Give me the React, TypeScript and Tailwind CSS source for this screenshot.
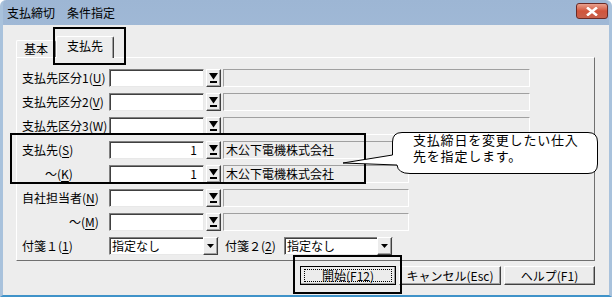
import type { ReactNode } from "react";

const font = "font-['Noto_Sans_CJK_JP','Noto_Sans_CJK_SC',sans-serif]";

const DropButton = ({ small = false }: { small?: boolean }) => (
  <div className="w-[15px] h-[18px] ml-[2px] flex items-center justify-center bg-[#ececec] border border-t-white border-l-white border-r-[#404040] border-b-[#404040] shadow-[inset_-1px_-1px_0_#a0a0a0]">
    {small ? (
      <svg width="7" height="4" viewBox="0 0 7 4">
        <path d="M0 0h7L3.5 4z" fill="#000" />
      </svg>
    ) : (
      <svg width="9" height="11" viewBox="0 0 9 11">
        <path d="M0 0h9L4.5 6.5z" fill="#000" />
        <rect x="1" y="8" width="7" height="2" fill="#000" />
      </svg>
    )}
  </div>
);

const Sunken = ({ children, className = "" }: { children?: ReactNode; className?: string }) => (
  <div
    className={`h-[18px] flex items-center bg-white border border-t-[#808080] border-l-[#808080] border-r-[#e8e8e8] border-b-[#e8e8e8] shadow-[inset_1px_1px_0_#404040] ${className}`}
  >
    {children}
  </div>
);

type RowProps = {
  label: ReactNode;
  value?: string;
  name?: string;
  fieldWidth: string;
};

const Row = ({ label, value, name, fieldWidth }: RowProps) => (
  <div className="h-[24px] flex items-center">
    <div className="w-[87px] text-[12px] leading-none">{label}</div>
    <Sunken className="w-[95px] justify-end pr-[6px] text-[12px]">{value}</Sunken>
    <DropButton />
    <div
      className={`h-[18px] ml-[2px] flex items-center pl-[2px] text-[12px] border border-t-[#a0a0a0] border-l-[#a0a0a0] border-r-white border-b-white ${fieldWidth}`}
    >
      {name}
    </div>
  </div>
);

const U = ({ c }: { c: string }) => <span className="underline underline-offset-2">{c}</span>;

const Button = ({ children, focused = false, w }: { children: ReactNode; focused?: boolean; w: string }) => (
  <div
    className={`${w} h-[19px] flex items-center justify-center bg-[#ececec] text-[12px] border ${
      focused ? "border-black" : "border-t-white border-l-white border-r-[#404040] border-b-[#404040]"
    } shadow-[inset_-1px_-1px_0_#a0a0a0]`}
  >
    {focused ? (
      <div className="w-[88px] h-[13px] flex items-center justify-center border border-dotted border-black">
        {children}
      </div>
    ) : (
      children
    )}
  </div>
);

export default function App() {
  return (
    <div className={`w-[615px] h-[298px] bg-white relative overflow-hidden text-black ${font}`}>
      <div className="w-[612px] h-[297px] flex flex-col rounded-t-[6px] border-l-[3px] border-r-[3px] border-b-[2px] border-l-[#a9c2dc] border-r-[#a9c2dc] border-b-[#3f93c9] bg-gradient-to-b from-[#9db6d4] to-[#bcd1e9]">
        {/* title bar */}
        <div className="h-[25px] flex items-center justify-between pl-[4px] pr-[1px]">
          <span className="text-[12px] leading-none">支払締切　条件指定</span>
          <div className="w-[32px] h-[16px] mb-[3px] rounded-[3px] border border-[#6b2a25] bg-gradient-to-b from-[#e8a08e] via-[#d0553c] to-[#c8614c] flex items-center justify-center">
            <svg width="12" height="9" viewBox="0 0 12 9">
              <path d="M1 0.5L11 8.5M11 0.5L1 8.5" stroke="#fff" strokeWidth="2.6" />
            </svg>
          </div>
        </div>

        {/* client area */}
        <div className="flex-1 bg-[#ededed] flex flex-col pl-[13px]">
          {/* tabs */}
          <div className="h-[32px] flex items-end">
            <div className="w-[40px] h-[17px] flex items-center justify-center text-[12px] border border-b-0 border-t-white border-l-white border-r-[#808080] rounded-t-[2px] pb-[1px]">
              基本
            </div>
            <div className="w-[58px] h-[22px] -mb-[1px] relative z-10 flex items-center justify-center text-[12px] bg-[#ededed] border border-b-0 border-t-white border-l-white border-r-[#404040] rounded-t-[2px] pb-[3px] shadow-[inset_-1px_0_0_#a0a0a0]">
              支払先
            </div>
          </div>

          {/* panel */}
          <div className="w-[579px] h-[204px] border border-t-white border-l-white border-r-[#707070] border-b-[#707070] pl-[5px] pt-[8px] flex flex-col">
            <Row label={<>支払先区分1(<U c="U" />)</>} fieldWidth="w-[307px]" />
            <Row label={<>支払先区分2(<U c="V" />)</>} fieldWidth="w-[307px]" />
            <Row label={<>支払先区分3(<U c="W" />)</>} fieldWidth="w-[307px]" />
            <Row label={<>支払先(<U c="S" />)</>} value="1" name="木公下電機株式会社" fieldWidth="w-[186px]" />
            <Row label={<span className="pl-[23px]">〜(<U c="K" />)</span>} value="1" name="木公下電機株式会社" fieldWidth="w-[186px]" />
            <Row label={<>自社担当者(<U c="N" />)</>} fieldWidth="w-[186px]" />
            <Row label={<span className="pl-[47px]">〜(<U c="M" />)</span>} fieldWidth="w-[186px]" />
            <div className="h-[24px] flex items-center text-[12px]">
              <div className="w-[87px]">
                付箋１(<U c="1" />)
              </div>
              <Sunken className="w-[110px] pl-[2px] justify-between">
                <span>指定なし</span>
                <DropButton small />
              </Sunken>
              <div className="w-[65px] pl-[6px]">
                付箋２(<U c="2" />)
              </div>
              <Sunken className="w-[109px] pl-[2px] justify-between">
                <span>指定なし</span>
                <DropButton small />
              </Sunken>
            </div>
          </div>

          {/* buttons */}
          <div className="flex items-center gap-[3px] pl-[284px] pt-[5px]">
            <Button w="w-[96px]" focused>
              開始(F12)
            </Button>
            <Button w="w-[102px]">キャンセル(Esc)</Button>
            <Button w="w-[91px]">ヘルプ(F1)</Button>
          </div>
        </div>
      </div>

      {/* annotation frames */}
      <div className="absolute left-[53px] top-[27px] w-[73px] h-[38px] border-2 border-black z-20" />
      <div className="absolute left-[10px] top-[133px] w-[356px] h-[51px] border-2 border-black z-20" />
      <div className="absolute left-[293px] top-[255px] w-[109px] h-[39px] border-2 border-black z-20" />

      {/* callout */}
      <div className="absolute left-[340px] top-[128px] w-[262px] h-[50px] z-30">
        <svg width="262" height="50" viewBox="0 0 262 50" className="absolute inset-0">
          <path
            d="M62 4.5 L248 4.5 Q257.5 4.5 257.5 14 L257.5 36 Q257.5 45.5 248 45.5 L70 45.5 Q58 45.5 57 37 L3 35 L52.5 27 L52.5 14 Q52.5 4.5 62 4.5 Z"
            fill="#fff"
            stroke="#000"
          />
        </svg>
        <div className="absolute left-[73px] top-[4px] text-[13px] leading-[16px] tracking-[0.8px]">
          <div>支払締日を変更したい仕入</div>
          <div>先を指定します。</div>
        </div>
      </div>
    </div>
  );
}
